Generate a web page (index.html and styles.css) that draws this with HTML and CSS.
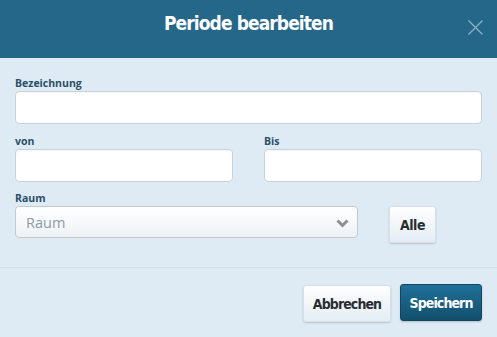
FILE: index.html
```html
<!DOCTYPE html>
<html lang="de">
<head>
<meta charset="utf-8">
<title>Periode bearbeiten</title>
<link rel="stylesheet" href="styles.css">
</head>
<body>
<div class="modal">
  <header class="modal-header">
    <h1 class="modal-title">Periode bearbeiten</h1>
    <button class="close" aria-label="Schließen">
      <svg width="15" height="15" viewBox="0 0 15 15"><path d="M0.5 0.5 L14.5 14.5 M14.5 0.5 L0.5 14.5" stroke="#8db1c5" stroke-width="1.3" fill="none"/></svg>
    </button>
  </header>
  <div class="modal-body">
    <div class="field">
      <label class="label">Bezeichnung</label>
      <input class="input" type="text">
    </div>
    <div class="row">
      <div class="field">
        <label class="label">von</label>
        <input class="input" type="text">
      </div>
      <div class="field">
        <label class="label">Bis</label>
        <input class="input" type="text">
      </div>
    </div>
    <div class="room-row">
      <div class="field room-field">
        <label class="label">Raum</label>
        <div class="select">
          <span class="placeholder">Raum</span>
          <svg class="chev" width="13" height="9" viewBox="0 0 13 9"><path d="M1.5 1.5 L6.5 6.5 L11.5 1.5" stroke="#8d8f92" stroke-width="3" fill="none"/></svg>
        </div>
      </div>
      <button class="btn btn-light btn-alle">Alle</button>
    </div>
  </div>
  <footer class="modal-footer">
    <button class="btn btn-light btn-cancel">Abbrechen</button>
    <button class="btn btn-primary btn-save">Speichern</button>
  </footer>
</div>
</body>
</html>
```

FILE: styles.css
```css
* { box-sizing: border-box; }
html, body { margin: 0; padding: 0; }
body {
  width: 497px;
  height: 337px;
  background: #deebf5;
  font-family: "Open Sans", "DejaVu Sans", sans-serif;
  overflow: hidden;
}
.modal { width: 497px; height: 337px; background: #deebf5; }
.modal-header {
  height: 58px;
  background: #246789;
  position: relative;
  display: flex;
  align-items: center;
  justify-content: center;
}
.modal-title {
  margin: 0;
  margin-top: -12px;
  color: #ffffff;
  font-family: "DejaVu Sans", sans-serif;
  font-stretch: condensed;
  font-weight: bold;
  font-size: 19px;
  letter-spacing: -0.9px;
}
.close {
  position: absolute;
  right: 14px;
  top: 20px;
  padding: 0;
  border: 0;
  background: none;
  width: 15px;
  height: 15px;
  display: block;
}
.close svg { display: block; }
.modal-body {
  padding: 18px 15px 0 15px;
  height: 210px;
  border-bottom: 1px solid #d3e0ea;
}
.field { display: flex; flex-direction: column; }
.label {
  font-size: 10.5px;
  font-weight: bold;
  color: #2b4f67;
  line-height: 14px;
  height: 14px;
  margin-bottom: 1px;
}
.input {
  height: 33px;
  border: 1px solid #c8d2db;
  border-radius: 4px;
  background: #ffffff;
  box-shadow: inset 0 1px 2px rgba(0,0,0,0.04);
  margin: 0;
  padding: 0 8px;
}
.row {
  display: grid;
  grid-template-columns: 218px 218px;
  column-gap: 31px;
  margin-top: 10px;
}
.room-row {
  display: flex;
  align-items: flex-start;
  margin-top: 9px;
}
.room-field { width: 343px; }
.select {
  height: 32px;
  border: 1px solid #c3c9ce;
  border-radius: 4px;
  background: linear-gradient(#ffffff, #eef2f5);
  display: flex;
  align-items: center;
  justify-content: space-between;
  padding: 0 8px 0 10px;
}
.placeholder {
  color: #8d9ba6;
  font-size: 14.5px;
  font-family: "Open Sans", "DejaVu Sans", sans-serif;
}
.chev { display: block; margin-top: 2px; }
.btn {
  font-family: "DejaVu Sans", sans-serif;
  font-stretch: condensed;
  font-weight: bold;
  font-size: 14px;
  letter-spacing: -0.9px;
  border-radius: 3px;
  padding: 0;
  cursor: pointer;
}
.btn-light {
  color: #2a2d30;
  background: linear-gradient(#ffffff, #e3edf5);
  border: 1px solid #d6e1ea;
  box-shadow: 0 1px 2px rgba(0,0,0,0.18);
}
.btn-alle {
  width: 47px;
  height: 37px;
  margin-left: 31px;
  margin-top: 15px;
  letter-spacing: -0.5px;
}
.modal-footer {
  display: flex;
  justify-content: flex-end;
  gap: 9px;
  padding: 17px 15px 0 0;
}
.btn-cancel { width: 88px; height: 37px; }
.btn-primary {
  color: #ffffff;
  background: linear-gradient(#1f7099, #134f6d);
  border: 1px solid #124660;
  box-shadow: 0 1px 2px rgba(0,0,0,0.2);
}
.btn-save { width: 82px; height: 37px; margin-top: -1px; }
```
